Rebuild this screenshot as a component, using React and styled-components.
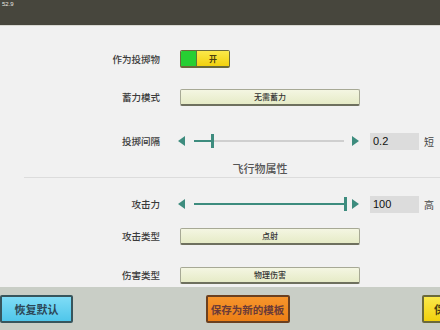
import styled, { createGlobalStyle } from 'styled-components';

const GlobalStyle = createGlobalStyle`
  html, body {
    margin: 0;
    padding: 0;
    background: #f1f1f1;
    font-family: "Noto Sans CJK SC", "Noto Sans", sans-serif;
  }
`;

const Screen = styled.div`
  width: 440px;
  height: 330px;
  display: flex;
  flex-direction: column;
  overflow: hidden;
  background: #f1f1f1;
`;

const TopBar = styled.div`
  height: 26px;
  flex-shrink: 0;
  background: #47463d;
  border-bottom: 1px solid #d8d8d2;
  color: #e8e8e0;
  font-family: "Liberation Sans", sans-serif;
  font-size: 6px;
  padding: 1px 0 0 2px;
  box-sizing: border-box;
`;

const Content = styled.div`
  flex: 1;
  display: flex;
  flex-direction: column;
`;

const Row = styled.div`
  display: grid;
  grid-template-columns: 160px 180px;
  column-gap: 20px;
  align-items: center;
  height: 20px;
  margin-top: ${(p) => p.$mt}px;
`;

const Label = styled.div`
  text-align: right;
  font-size: 9.5px;
  font-weight: 500;
  color: #3a3a3a;
`;

const Toggle = styled.div`
  display: flex;
  width: 50px;
  height: 18px;
  border: 1px solid #6b6a3a;
  border-bottom-width: 2px;
  border-radius: 2px;
  box-sizing: border-box;
  overflow: hidden;
`;

const ToggleOff = styled.div`
  width: 15px;
  background: #27cf33;
  border-right: 1px solid #5a7a3a;
`;

const ToggleOn = styled.div`
  flex: 1;
  background: linear-gradient(#fbe94a, #f2d10e);
  display: flex;
  align-items: center;
  justify-content: center;
  font-size: 8px;
  font-weight: 700;
  color: #4a3f10;
`;

const Select = styled.div`
  width: 180px;
  height: 17px;
  box-sizing: border-box;
  background: linear-gradient(#f4f6e2, #e6ebc7);
  border: 1px solid #a7a995;
  border-bottom: 2px solid #6e705e;
  border-radius: 2px;
  display: flex;
  align-items: center;
  justify-content: center;
  font-size: 8px;
  font-weight: 500;
  color: #333;
`;

const SliderRow = styled.div`
  display: flex;
  align-items: center;
  width: 260px;
`;

const Arrow = styled.div`
  width: 0;
  height: 0;
  border-top: 5px solid transparent;
  border-bottom: 5px solid transparent;
  ${(p) =>
    p.$dir === 'left'
      ? 'border-right: 7px solid #3d8c7e; margin: 0 9px 0 -2px;'
      : 'border-left: 7px solid #3d8c7e; margin: 0 11px 0 6px;'}
`;

const Track = styled.div`
  position: relative;
  width: 152px;
  height: 14px;
`;

const TrackLine = styled.div`
  position: absolute;
  left: 0;
  right: 2px;
  top: 6px;
  height: 2px;
  box-sizing: border-box;
  background: #f7f7f7;
  border: 1px solid #cfcfcf;
`;

const TrackFill = styled.div`
  position: absolute;
  left: 0;
  top: 6px;
  height: 2px;
  background: #3d8c7e;
`;

const Handle = styled.div`
  position: absolute;
  top: 0;
  width: 3px;
  height: 14px;
  background: #3d8c7e;
`;

const ValueBox = styled.div`
  width: 49px;
  height: 17px;
  background: #dcdcdc;
  font-family: "Liberation Sans", sans-serif;
  font-size: 11px;
  color: #111;
  display: flex;
  align-items: center;
  padding-left: 3px;
  box-sizing: border-box;
`;

const Unit = styled.div`
  margin-left: 5px;
  font-size: 10px;
  color: #444;
`;

const SectionTitle = styled.div`
  margin: 8px 0 0 24px;
  height: 18px;
  line-height: 18px;
  padding-left: 56px;
  text-align: center;
  font-size: 11px;
  font-weight: 500;
  color: #555;
  border-bottom: 1px solid #dcdcdc;
`;

const Footer = styled.div`
  height: 43px;
  flex-shrink: 0;
  width: 495px;
  background: #c9cec6;
  display: flex;
  justify-content: space-between;
  align-items: flex-start;
  padding-top: 8px;
  box-sizing: border-box;
`;

const colors = {
  blue: { bg: 'linear-gradient(#7fdcf6, #4fc6ea)', border: '#37555c', text: '#2c4656' },
  orange: { bg: 'linear-gradient(#f7952c, #ec7f16)', border: '#6b4020', text: '#6a3a38' },
  yellow: { bg: 'linear-gradient(#fbe94a, #f1d00d)', border: '#6b6a3a', text: '#4a3f10' },
};

const FootButton = styled.div`
  height: 28px;
  width: ${(p) => p.$w}px;
  box-sizing: border-box;
  background: ${(p) => colors[p.$tone].bg};
  border: 2px solid ${(p) => colors[p.$tone].border};
  border-radius: 2px;
  display: flex;
  align-items: center;
  justify-content: ${(p) => (p.$start ? 'flex-start' : 'center')};
  padding-left: ${(p) => (p.$start ? '10px' : '0')};
  font-size: ${(p) => p.$fs || 11}px;
  font-weight: 700;
  white-space: nowrap;
  color: ${(p) => colors[p.$tone].text};
`;

const Slider = ({ pct, value, unit }) => (
  <SliderRow>
    <Arrow $dir="left" />
    <Track>
      <TrackLine />
      <TrackFill style={{ width: `${pct * 150}px` }} />
      <Handle style={{ left: `${pct * 150}px` }} />
    </Track>
    <Arrow $dir="right" />
    <ValueBox>{value}</ValueBox>
    <Unit>{unit}</Unit>
  </SliderRow>
);

export default function App() {
  return (
    <Screen>
      <GlobalStyle />
      <TopBar>52.9</TopBar>
      <Content>
        <Row $mt={23}>
          <Label>作为投掷物</Label>
          <Toggle>
            <ToggleOff />
            <ToggleOn>开</ToggleOn>
          </Toggle>
        </Row>
        <Row $mt={18}>
          <Label>蓄力模式</Label>
          <Select>无需蓄力</Select>
        </Row>
        <Row $mt={24}>
          <Label>投掷间隔</Label>
          <Slider pct={0.11} value="0.2" unit="短" />
        </Row>
        <SectionTitle>飞行物属性</SectionTitle>
        <Row $mt={16}>
          <Label>攻击力</Label>
          <Slider pct={1} value="100" unit="高" />
        </Row>
        <Row $mt={12}>
          <Label>攻击类型</Label>
          <Select>点射</Select>
        </Row>
        <Row $mt={19}>
          <Label>伤害类型</Label>
          <Select>物理伤害</Select>
        </Row>
      </Content>
      <Footer>
        <FootButton $tone="blue" $w={73}>恢复默认</FootButton>
        <FootButton $tone="orange" $w={84} $fs={10.5}>保存为新的模板</FootButton>
        <FootButton $tone="yellow" $w={73} $start>保存</FootButton>
      </Footer>
    </Screen>
  );
}
